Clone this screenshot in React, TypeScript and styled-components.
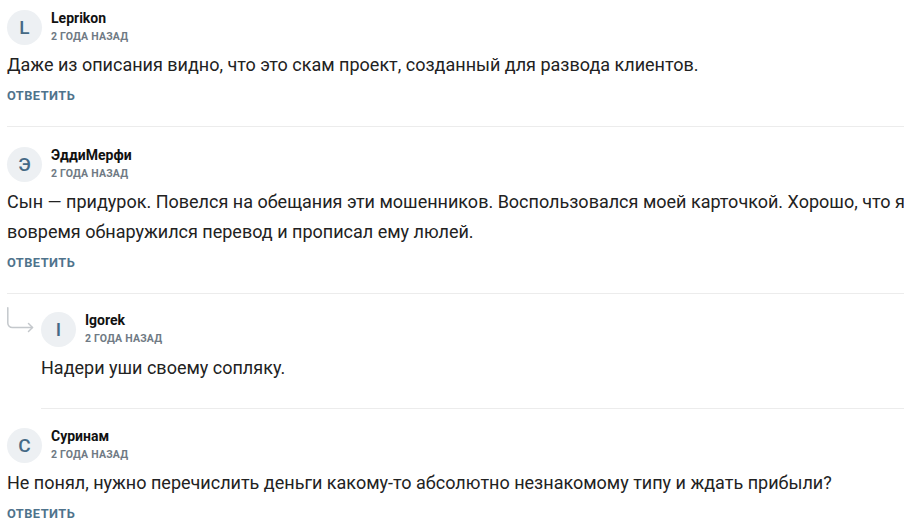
import React from "react";
import styled, { createGlobalStyle } from "styled-components";

const Global = createGlobalStyle`
  html, body { margin: 0; padding: 0; background: #fff; overflow-x: hidden; }
  body { font-family: Roboto, "Noto Sans", Arial, sans-serif; color: #222; }
`;

const List = styled.div`
  padding: 0 0 0 7px;
  width: 900px;
`;

const CommentBox = styled.div<{ $first?: boolean; $last?: boolean }>`
  padding: ${(p) => (p.$first ? "10px" : p.$last ? "19px" : "20px")} 0 ${(p) => (p.$last ? "0" : "22px")};
  border-bottom: ${(p) => (p.$last ? "none" : "1px solid #ececec")};
`;

const NestedRow = styled.div`
  display: flex;
`;

const ReplyGutter = styled.div`
  width: 34px;
  flex: none;
  padding-top: 13px;
  svg { display: block; }
`;

const NestedBody = styled.div`
  flex: 1;
  padding: 18px 0 25px;
  border-bottom: 1px solid #ececec;
`;

const Header = styled.div`
  display: flex;
  align-items: center;
  gap: 9px;
`;

const Avatar = styled.div`
  width: 35px;
  height: 35px;
  border-radius: 50%;
  background: #edf0f3;
  color: #456985;
  display: flex;
  align-items: center;
  justify-content: center;
  font-size: 19px;
  font-weight: 500;
  flex: none;
`;

const Meta = styled.div`
  display: flex;
  flex-direction: column;
  gap: 4px;
  margin-top: -2px;
`;

const Name = styled.div`
  font-size: 14px;
  font-weight: 700;
  line-height: 16px;
  color: #111;
`;

const Time = styled.div`
  font-size: 10.5px;
  font-weight: 700;
  line-height: 13px;
  color: #6f7a84;
  text-transform: uppercase;
  letter-spacing: 0.2px;
`;

const Text = styled.div<{ $nested?: boolean }>`
  margin-top: ${(p) => (p.$nested ? "6px" : "5px")};
  font-size: 18px;
  line-height: 30px;
  color: #222;
`;

const ReplyButton = styled.button`
  margin-top: 8px;
  padding: 0;
  border: 0;
  background: none;
  font-family: inherit;
  font-size: 12.8px;
  font-weight: 700;
  line-height: 16px;
  letter-spacing: 0.45px;
  color: #4f738c;
  text-transform: uppercase;
  cursor: pointer;
  display: block;
`;

type C = { name: string; initial: string; text: string };

const CommentHead = ({ c }: { c: C }) => (
  <Header>
    <Avatar>{c.initial}</Avatar>
    <Meta>
      <Name>{c.name}</Name>
      <Time>2 года назад</Time>
    </Meta>
  </Header>
);

const ReplyArrow = () => (
  <svg width="28" height="28" viewBox="0 0 28 28" fill="none" stroke="#c4c8cc" strokeWidth="1.5" strokeLinecap="round" strokeLinejoin="round">
    <path d="M0.8 0.8 V16 a4.5 4.5 0 0 0 4.5 4.5 H25.5" />
    <path d="M21.5 16.5 L25.5 20.5 L21.5 24.5" />
  </svg>
);

export default function App() {
  const comments: C[] = [
    { name: "Leprikon", initial: "L", text: "Даже из описания видно, что это скам проект, созданный для развода клиентов." },
    { name: "ЭддиМерфи", initial: "Э", text: "Сын — придурок. Повелся на обещания эти мошенников. Воспользовался моей карточкой. Хорошо, что я вовремя обнаружился перевод и прописал ему люлей." },
  ];
  const nested: C = { name: "Igorek", initial: "I", text: "Надери уши своему сопляку." };
  const last: C = { name: "Суринам", initial: "С", text: "Не понял, нужно перечислить деньги какому-то абсолютно незнакомому типу и ждать прибыли?" };

  return (
    <>
      <Global />
      <List>
        {comments.map((c, i) => (
          <CommentBox key={c.name} $first={i === 0}>
            <CommentHead c={c} />
            <Text>{c.text}</Text>
            <ReplyButton>Ответить</ReplyButton>
          </CommentBox>
        ))}
        <NestedRow>
          <ReplyGutter>
            <ReplyArrow />
          </ReplyGutter>
          <NestedBody>
            <CommentHead c={nested} />
            <Text $nested>{nested.text}</Text>
          </NestedBody>
        </NestedRow>
        <CommentBox $last>
          <CommentHead c={last} />
          <Text>{last.text}</Text>
          <ReplyButton>Ответить</ReplyButton>
        </CommentBox>
      </List>
    </>
  );
}
